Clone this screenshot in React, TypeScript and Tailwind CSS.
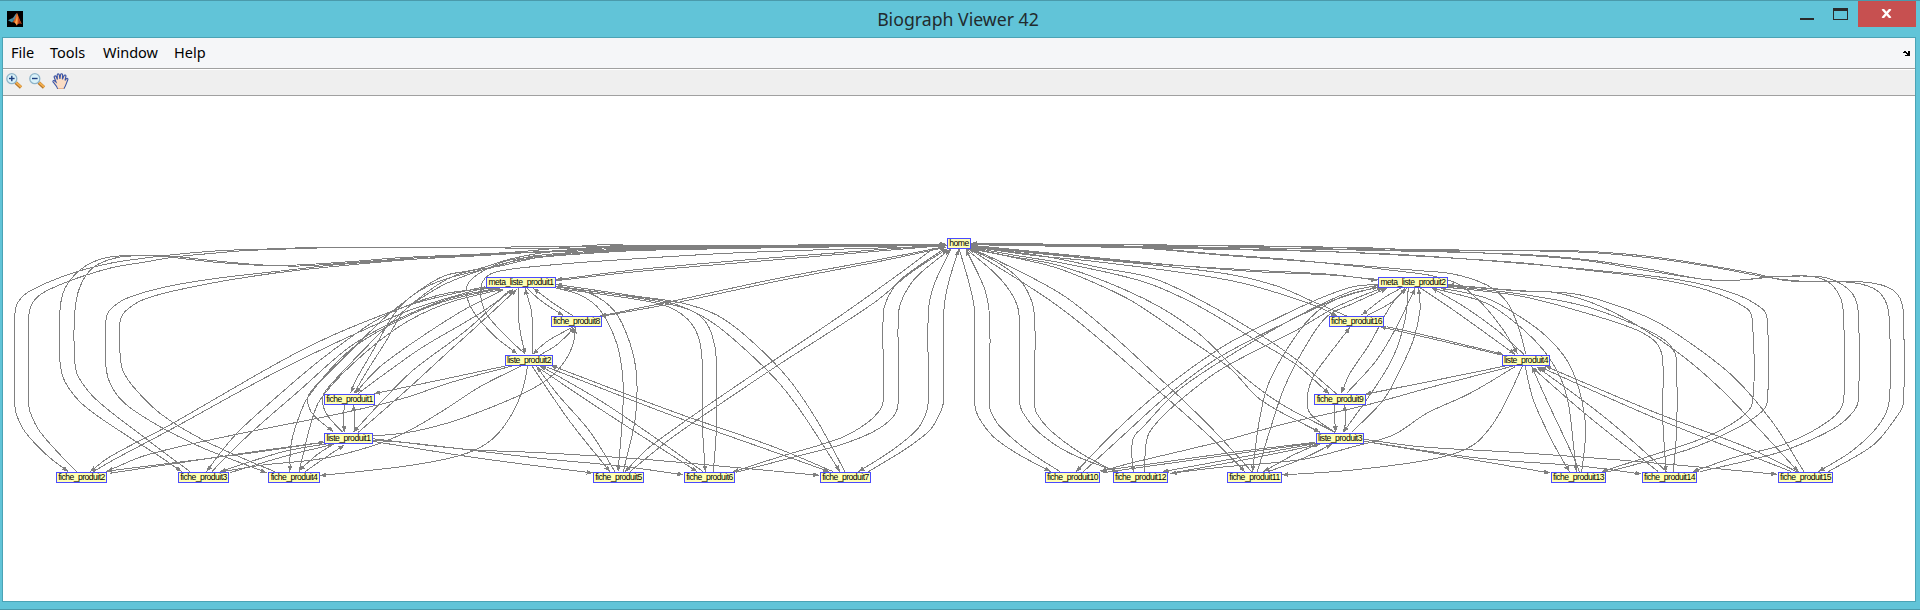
import React from "react";

type GraphNode = { label: string; x: number; y: number; w: number };

const nodes: GraphNode[] = [
  { label: "home", x: 947, y: 238, w: 24 },
  { label: "meta_liste_produit1", x: 486, y: 277, w: 70 },
  { label: "fiche_produit8", x: 551, y: 316, w: 51 },
  { label: "liste_produit2", x: 505, y: 355, w: 48 },
  { label: "fiche_produit1", x: 324, y: 394, w: 51 },
  { label: "liste_produit1", x: 324, y: 433, w: 49 },
  { label: "fiche_produit2", x: 56, y: 472, w: 51 },
  { label: "fiche_produit3", x: 178, y: 472, w: 51 },
  { label: "fiche_produit4", x: 268, y: 472, w: 52 },
  { label: "fiche_produit5", x: 593, y: 472, w: 51 },
  { label: "fiche_produit6", x: 684, y: 472, w: 51 },
  { label: "fiche_produit7", x: 820, y: 472, w: 51 },
  { label: "meta_liste_produit2", x: 1378, y: 277, w: 70 },
  { label: "fiche_produit16", x: 1329, y: 316, w: 55 },
  { label: "liste_produit4", x: 1502, y: 355, w: 48 },
  { label: "fiche_produit9", x: 1314, y: 394, w: 52 },
  { label: "liste_produit3", x: 1316, y: 433, w: 48 },
  { label: "fiche_produit10", x: 1045, y: 472, w: 55 },
  { label: "fiche_produit12", x: 1113, y: 472, w: 55 },
  { label: "fiche_produit11", x: 1227, y: 472, w: 55 },
  { label: "fiche_produit13", x: 1551, y: 472, w: 55 },
  { label: "fiche_produit14", x: 1642, y: 472, w: 55 },
  { label: "fiche_produit15", x: 1778, y: 472, w: 55 },
];

// Edge control points are kept in thirds of a pixel, relative to the group's origin.
// "<" puts the arrow head on the first point, ">" on the last one.
const ORIGIN_Y = 230;
const groups: { ox: number; edges: string[] }[] = [
  {
    ox: 0,
    edges: [
      // home / outer leaves
      "< 205,725 140,675 75,605 50,555 44,515 44,260 55,215 95,180 215,130 330,100 430,85 530,73 660,62 800,57 930,53 1390,53 1600,50 2100,47 2835,42",
      "> 230,725 195,690 120,605 90,545 86,510 86,260 100,215 135,185 230,145 340,112 430,97 530,80 660,68 730,62 860,57 1000,53 1390,53 1700,55 2100,50 2838,42",
      "< 545,725 480,680 370,610 250,525 195,455 180,395 180,240 195,175 240,120 300,88 370,77 480,77 530,80 650,93 790,105 890,105 1050,95 1200,83 1400,74 1560,65 1700,52 1820,44 2000,50 2835,44",
      "> 570,725 430,620 290,510 235,440 224,390 224,250 240,170 280,112 350,83 430,77 480,78 550,86 650,97 780,106 900,108 1000,102 1200,87 1400,74 1560,68 1700,60 1830,48 2100,52 2838,42",
      "< 800,728 700,690 600,650 480,590 380,525 335,470 318,410 318,270 330,240 380,205 500,170 650,145 850,122 1000,105 1200,90 1440,77 1680,62 1900,55 2835,44",
      "> 825,725 740,690 600,625 480,550 400,470 368,420 360,370 360,275 380,240 440,205 580,170 750,140 900,120 1100,100 1200,91 1440,74 1680,65 1900,58 2838,46",
      // meta_liste_produit1 / leaves
      "< 270,725 330,680 500,590 840,395 1000,315 1200,235 1300,205 1455,170",
      "> 280,725 340,690 500,605 850,415 1200,252 1340,205 1460,172",
      "< 620,725 660,670 720,600 900,440 1000,360 1130,270 1240,220 1340,190 1480,173",
      "> 635,725 740,620 900,480 1050,350 1200,265 1350,205 1490,175",
      "< 870,725 872,650 890,580 925,500 1050,360 1200,270 1330,215 1500,175",
      "> 897,725 915,650 930,590 960,510 1060,400 1200,288 1340,220 1510,177",
      // liste_produit1 / leaves
      "> 970,637 760,668 318,724",
      "< 975,636 770,664 560,695 330,730",
      "> 990,640 850,665 660,725",
      "< 1003,642 850,680 690,728",
      "> 1000,642 950,675 897,722",
      "< 1033,645 980,680 915,725",
      "> 1033,525 1031,565 1033,607",
      "< 1060,525 1064,565 1063,607",
    ],
  },
  {
    ox: 280,
    edges: [
      // home / inner nodes
      "< 160,605 105,560 86,530 86,495 130,445 250,325 320,258 400,195 450,160 500,135 590,118 700,85 840,62 1100,50 1995,42",
      "> 188,607 145,560 130,530 130,495 160,455 270,340 350,262 430,195 500,148 560,125 660,108 760,85 860,70 1100,56 1995,44",
      "< 212,490 225,455 280,360 340,255 380,210 440,170 520,140 640,112 760,78 1020,62 1995,46",
      "> 222,490 260,425 320,330 370,245 430,200 500,160 600,122 720,90 900,72 1200,56 1995,46",
      "< 712,372 640,315 580,245 560,200 560,170 575,147 615,120 690,90 840,75 1020,62 1300,56 1995,46",
      "> 735,372 690,330 625,260 605,215 603,170 615,145 650,125 780,108 980,92 1380,68 1995,48",
      // meta_liste_produit1 / inner nodes
      "> 670,180 560,235 440,310 300,410 225,490",
      "< 700,178 600,250 430,350 330,420 235,490",
      "> 690,180 560,300 400,420 300,520 220,607",
      "< 710,178 600,280 500,370 380,480 235,607",
      "> 715,173 717,280 735,373",
      "< 735,175 755,250 758,373",
      "> 740,173 780,210 850,257",
      "< 760,175 820,220 880,258",
      "< 758,373 800,335 880,290",
      "> 780,375 830,345 885,292",
      // liste_produit2 / leaves
      "> 680,407 480,450 282,491",
      "> 700,407 520,455 360,508 160,555 -140,615 -400,675 -520,724",
      "> 725,407 600,470 500,535 400,595 300,640 180,675 100,690 -50,705 -180,726",
      "> 743,407 730,470 700,545 640,625 560,670 400,705 120,737",
      // liste_produit1 / far leaves
      "> 278,618 380,608 500,580 600,545 720,495 800,450 850,400 880,340 886,292",
      "> 278,634 600,685 938,729",
      "> 278,630 400,640 780,685 1020,708 1210,734",
      "> 278,626 560,658 780,668 1080,687 1340,710 1618,736",
      "> 755,407 870,575 990,725",
      "< 770,409 830,490 930,605 1005,725",
    ],
  },
  {
    ox: 540,
    edges: [
      "> -8,411 200,550 472,725",
      "< 0,407 200,524 490,725",
      "> 20,411 400,558 700,665 868,725",
      "< 32,406 400,545 700,650 880,725",
      "> 40,172 120,195 180,240 230,340 248,440 248,550 234,725",
      "< 47,170 150,190 225,245 270,340 290,440 285,570 250,725",
      "> 47,175 200,195 370,225 440,265 475,320 487,400 487,580 496,725",
      "< 47,170 300,205 450,240 500,280 525,350 529,420 529,600 520,725",
      "> 47,168 200,190 380,215 480,255 560,310 700,440 780,540 900,725",
      "< 47,163 300,200 430,220 530,255 620,320 740,440 830,570 915,725",
      "< 49,149 300,118 700,83 1218,44",
      "> 47,152 300,124 700,90 1220,46",
      "< 180,258 400,213 700,148 1000,92 1215,50",
      "> 180,260 400,220 700,156 1000,98 1218,52",
      "< 255,725 330,650 600,460 900,258 1080,130 1180,55",
      "> 270,725 400,620 700,415 1000,220 1110,130 1222,56",
      "< 578,726 720,680 900,625 980,580 1020,540 1030,510 1030,250 1045,200 1080,150 1210,58",
      "> 588,727 760,682 900,645 1000,605 1060,560 1075,515 1075,255 1090,200 1130,140 1230,58",
      "< 955,725 1050,665 1130,600 1160,545 1165,500 1165,250 1180,170 1232,57",
      "> 985,725 1100,655 1170,600 1200,550 1211,510 1211,250 1225,160 1257,58",
    ],
  },
  {
    ox: 930,
    edges: [
      "< 362,725 260,670 190,620 145,560 134,520 134,245 120,170 88,58",
      "> 390,725 290,660 210,590 185,550 179,530 179,270 165,180 108,58",
      "< 565,727 420,670 330,610 280,550 268,510 268,260 250,200 200,135 110,58",
      "> 555,725 450,668 360,600 320,550 314,520 314,265 300,200 260,140 190,90 115,57",
      "< 945,725 840,620 700,495 400,240 120,58",
      "> 965,725 850,600 700,455 420,210 200,90 122,56",
      "< 1170,607 1050,545 980,500 900,415 750,310 600,210 450,140 350,105 124,56",
      "> 1215,607 1050,520 930,430 800,305 640,205 400,110 220,75 124,54",
      "< 1198,492 1100,405 960,320 800,225 640,155 400,100 250,75 124,52",
      "> 1220,492 1100,390 1000,320 820,215 670,145 520,115 350,80 124,50",
      "< 1222,258 1150,225 960,165 800,134 500,95 300,75 124,50",
      "> 1250,258 1150,215 1040,168 880,130 500,88 300,68 124,48",
      "> 124,48 640,99 960,120 1200,133 1342,151",
      "< 124,46 640,97 960,124 1200,135 1344,149",
      // meta_liste_produit2 / left leaves
      "> 1344,163 1270,170 1170,205 1020,275 870,355 690,485 560,600 438,725",
      "< 1344,170 1240,200 1170,228 870,380 720,490 570,625 460,725",
      "> 1344,166 1260,185 1100,260 870,395 740,485 640,590 612,620 605,660 610,725",
      "< 1360,172 1220,230 1100,300 870,420 740,520 670,590 650,630 643,725",
      "> 1344,172 1250,195 1180,230 1110,300 1020,450 990,560 967,725",
      "< 1370,175 1270,220 1190,260 1120,360 1060,480 1020,600 982,725",
      // liste_produit3 / left leaves
      "> 1155,637 900,668 510,723",
      "< 1155,639 900,674 520,728",
      "> 1160,640 900,688 698,725",
      "< 1170,643 950,688 720,730",
    ],
  },
  {
    ox: 1220,
    edges: [
      "> -746,42 -300,48 0,73 200,88 400,108 550,125 640,138 720,165 790,225 850,300 893,372",
      "< -746,44 -300,50 0,75 200,90 400,105 600,122 700,132 800,165 860,215 895,290 917,372",
      "> 545,173 490,205 425,255",
      "< 560,175 510,220 440,257",
      "> 555,175 510,230 450,340 390,430 364,490",
      "< 585,175 530,290 470,390 380,490",
      "> 565,175 555,270 520,380 460,480 370,607",
      "< 596,175 600,240 580,330 540,420 490,510 395,607",
      "> 600,173 700,240 885,373",
      "< 635,173 740,235 830,300 912,373",
      "< 480,290 600,318 846,375",
      "> 500,290 600,312 850,373",
      "< 390,292 330,370 280,440 262,500 270,550 345,607",
      "> 860,407 650,450 435,493",
      "> 880,408 650,467 440,525 200,580 0,635 -270,700 -358,724",
      "> 885,410 750,490 620,550 520,615 400,650 250,688 0,712 -148,730",
      "> 907,408 870,490 820,580 760,645 650,685 400,720 187,735",
      "> 915,407 940,510 1000,640 1048,725",
      "< 935,409 980,510 1060,680 1078,725",
      "> 345,525 344,565 347,607",
      "< 373,525 378,570 370,607",
      "> 300,640 220,675 130,725",
      "< 335,643 250,685 145,725",
      "> 432,634 600,662 990,729",
      "> 432,634 780,685 1080,708 1264,732",
      "> 432,628 600,650 900,668 1200,690 1480,715 1672,733",
      "> 640,175 800,220 900,290 970,360 1020,440 1045,520 1060,640 1069,725",
      "< 660,173 800,205 900,260 980,320 1040,390 1075,470 1095,570 1095,640 1085,725",
      "> 684,172 900,198 1100,250 1250,300 1310,340 1328,390 1328,560 1338,725",
      "< 684,168 900,192 1100,230 1270,295 1340,335 1365,370 1370,400 1370,600 1360,725",
      "> 684,166 900,183 1000,187 1120,220 1250,285 1380,372 1500,475 1620,600 1735,725",
      "< 684,164 900,182 1050,190 1140,210 1300,270 1440,360 1550,450 1660,580 1752,725",
    ],
  },
  {
    ox: 1520,
    edges: [
      "< 35,411 200,555 415,725",
      "> 440,725 300,600 200,520 50,410",
      "< 60,411 400,562 700,680 812,724",
      "> 830,725 700,660 400,545 75,408",
      "< 245,725 400,675 560,620 660,565 697,520 697,270 680,235 560,180 400,145 150,115 0,98 -350,76 -700,60 -1646,42",
      "> 265,725 500,660 640,600 720,550 742,515 742,270 725,235 640,190 480,150 250,123 0,100 -350,74 -700,62 -1646,44",
      "< 518,725 650,680 800,640 930,570 970,515 970,250 960,200 930,160 880,140 760,140 660,150 570,150 400,125 200,92 0,75 -300,62 -900,52 -1646,42",
      "> 540,725 750,675 850,640 950,590 1000,545 1015,510 1015,250 1000,195 960,160 900,140 770,140 660,150 550,148 380,116 200,89 0,73 -400,62 -900,52 -1646,44",
      "< 895,725 1000,660 1080,580 1108,510 1108,270 1095,210 1060,175 990,157 850,154 750,143 560,108 400,85 220,68 0,62 -300,60 -470,53 -900,46 -1646,42",
      "> 925,725 1060,645 1130,560 1150,520 1150,250 1140,205 1110,175 1050,158 960,154 800,152 700,130 420,83 200,64 0,62 -350,58 -700,50 -1646,40",
    ],
  },
];

type Pt = [number, number];

function parseEdge(ox: number, src: string): { dir: string; pts: Pt[] } {
  const [dir, ...rest] = src.split(" ");
  const pts = rest.map((p): Pt => {
    const [x, y] = p.split(",").map(Number);
    return [ox + x / 3, ORIGIN_Y + y / 3];
  });
  return { dir, pts };
}

// Catmull-Rom spline with handles limited by the length of each span.
function smooth(pts: Pt[]): string {
  const tangent = (i: number): Pt => {
    const a = pts[Math.max(0, i - 1)];
    const b = pts[Math.min(pts.length - 1, i + 1)];
    const len = Math.hypot(b[0] - a[0], b[1] - a[1]) || 1;
    return [(b[0] - a[0]) / len, (b[1] - a[1]) / len];
  };
  let d = `M${pts[0][0].toFixed(1)} ${pts[0][1].toFixed(1)}`;
  for (let i = 0; i < pts.length - 1; i++) {
    const p = pts[i];
    const q = pts[i + 1];
    const h = Math.hypot(q[0] - p[0], q[1] - p[1]) / 3;
    const t = tangent(i);
    const u = tangent(i + 1);
    const n = [p[0] + t[0] * h, p[1] + t[1] * h, q[0] - u[0] * h, q[1] - u[1] * h, q[0], q[1]];
    d += "C" + n.map((v) => v.toFixed(1)).join(" ");
  }
  return d;
}

function arrow(pts: Pt[], atEnd: boolean): string {
  const tip = atEnd ? pts[pts.length - 1] : pts[0];
  const from = atEnd ? pts[pts.length - 2] : pts[1];
  const len = Math.hypot(tip[0] - from[0], tip[1] - from[1]) || 1;
  const ux = (tip[0] - from[0]) / len;
  const uy = (tip[1] - from[1]) / len;
  const bx = tip[0] - ux * 6;
  const by = tip[1] - uy * 6;
  return `M${tip[0]} ${tip[1]}L${bx - uy * 2.4} ${by + ux * 2.4}L${bx + uy * 2.4} ${by - ux * 2.4}Z`;
}

const edges = groups.flatMap((g) => g.edges.map((e) => parseEdge(g.ox, e)));

function MatlabLogo() {
  return (
    <svg width="16" height="16" viewBox="0 0 16 16" className="block bg-black">
      <path d="M1 9.2 5 7.3 7 9.5 5 11.5Z" fill="#3f8fa8" />
      <path d="M5 7.3C7 6.6 7.6 3.5 10 2L8.6 8 7 9.5Z" fill="#5a8fa0" />
      <path d="M5 11.5C6.2 11.2 7.8 8.8 10 2c1.8 3 3 8.6 5 10.8-2-.9-3.6-.7-5.3 1.7C8.7 12.5 7.5 10.8 5 11.5Z" fill="#e0601f" />
      <path d="M10 2c-.2 4-.8 8-2.2 9.6.9.7 1.4 1.8 1.9 2.9.9-2 1.3-7.5.3-12.5Z" fill="#f9a650" />
      <path d="M10.5 4c1.200 3 2.200 7 4.200 8.600-1.400-.5-2.200-.5-3.200.2.300-3-.1-6-1-8.800Z" fill="#a52c14" />
    </svg>
  );
}

function Magnifier({ plus }: { plus: boolean }) {
  return (
    <svg width="17" height="16" viewBox="0 0 17 16" className="block">
      <path d="M9.600 9.600 15 14.500" stroke="#b5762a" strokeWidth="3.400" />
      <path d="M10 9.400 15.200 14" stroke="#f5b04e" strokeWidth="1.800" />
      <circle cx="5.800" cy="5.700" r="5" fill="#d9f2fa" stroke="#8fb4c9" strokeWidth="1.300" />
      <path d="M3 5.500h5.600" stroke="#1f3f7f" strokeWidth="1.400" />
      {plus && <path d="M5.800 2.800v5.500" stroke="#1f3f7f" strokeWidth="1.400" />}
    </svg>
  );
}

function Hand() {
  return (
    <svg width="17" height="16" viewBox="0 0 17 16" className="block">
      <path
        d="M5.500 15.500C5 13 3.500 12 1.200 9.200.3 8 1.700 7 2.800 8L4 9 2.200 4.300C1.800 2.800 3.600 2.300 4.200 3.600L5.400 6.500 5.200 2C5.200.5 7.100.5 7.300 1.900L7.900 5.800 8.600 1.700C8.900.3 10.700.6 10.600 2L10.400 6.200 12 2.800C12.600 1.500 14.200 2 13.900 3.500L13 7.300 14.200 5.800C15 4.800 16.300 5.500 15.800 6.700 14.800 9 14 12.500 12 15.500Z"
        fill="#fbdcc4"
        stroke="#3a56a8"
        strokeWidth="1.100"
      />
      <path d="M5.800 15.500h6" stroke="#e8b48e" strokeWidth="1" />
    </svg>
  );
}

export default function App() {
  return (
    <div className="flex h-[610px] w-[1920px] flex-col overflow-hidden border-t border-b border-[#4a9aab] bg-[#61c4d8] font-['Noto_Sans','Open_Sans',sans-serif]">
      <header className="flex h-9 shrink-0 items-start">
        <div className="w-[202px] pt-[10px] pl-[7px]">
          <MatlabLogo />
        </div>
        <h1 className="flex-1 pt-[5px] text-center text-[17.7px] leading-[26px] text-[#222b2e]">Biograph Viewer 42</h1>
        <div className="flex w-[206px] items-start justify-end pr-1">
          <button aria-label="Minimize" className="mt-[17px] mr-[19px] h-0.5 w-3.5 bg-[#2a2a2a]" />
          <button aria-label="Maximize" className="mt-[7px] mr-[10px] h-3 w-[15px] border border-t-[3px] border-[#2a2a2a]" />
          <button aria-label="Close" className="flex h-[26px] w-[58px] items-center justify-center bg-[#c75050] pr-px pb-px">
            <svg width="11" height="9" viewBox="0 0 11 9" className="block">
              <path d="M1.500 0 9.500 9M9.500 0 1.500 9" stroke="#fff" strokeWidth="2.400" />
            </svg>
          </button>
        </div>
      </header>

      <main className="mr-1 mb-[7px] ml-0.5 flex min-h-0 flex-1 flex-col border border-[#4ba3b5] bg-white">
        <nav className="flex h-[31px] shrink-0 items-center border-b border-[#a0a0a0] bg-[#f5f6f8] pl-2 text-[14.5px] text-black">
          <span className="w-[39px]">File</span>
          <span className="w-[53px]">Tools</span>
          <span className="w-[71px]">Window</span>
          <span>Help</span>
          <svg width="7" height="5" viewBox="0 0 7 5" className="mr-[5px] ml-auto block" shapeRendering="crispEdges">
            <path d="M0 1h1V0h2v1h1v1h1V0h2v5H2V4h2V3H3V2H0Z" fill="#000" />
          </svg>
        </nav>
        <div className="flex h-[27px] shrink-0 items-start gap-1.5 border-t border-b border-t-white border-b-[#a0a0a0] bg-[#efefef] pt-[3px] pl-[3px]">
          <Magnifier plus />
          <Magnifier plus={false} />
          <Hand />
        </div>
        <section className="relative min-h-0 flex-1 overflow-hidden bg-white">
          <svg
            className="absolute top-0 left-0 block"
            width="1912"
            height="505"
            viewBox="3 96 1912 505"
            shapeRendering="crispEdges"
          >
            <g fill="none" stroke="#808080" strokeWidth="1">
              {edges.map((e, i) => (
                <path key={i} d={smooth(e.pts)} />
              ))}
            </g>
            <g fill="#808080">
              {edges.map((e, i) => (
                <path key={i} d={arrow(e.pts, e.dir === ">")} />
              ))}
            </g>
          </svg>
          {nodes.map((n) => (
            <div
              key={n.label}
              className="absolute flex h-[11px] items-center justify-center border border-[#4a4aff] bg-[#ffffb3] text-[8.6px] leading-[9px] tracking-[-0.52px] whitespace-nowrap text-black font-['Liberation_Sans',Arial,sans-serif]"
              style={{ left: n.x - 3, top: n.y - 96, width: n.w }}
            >
              {n.label}
            </div>
          ))}
        </section>
      </main>
    </div>
  );
}
